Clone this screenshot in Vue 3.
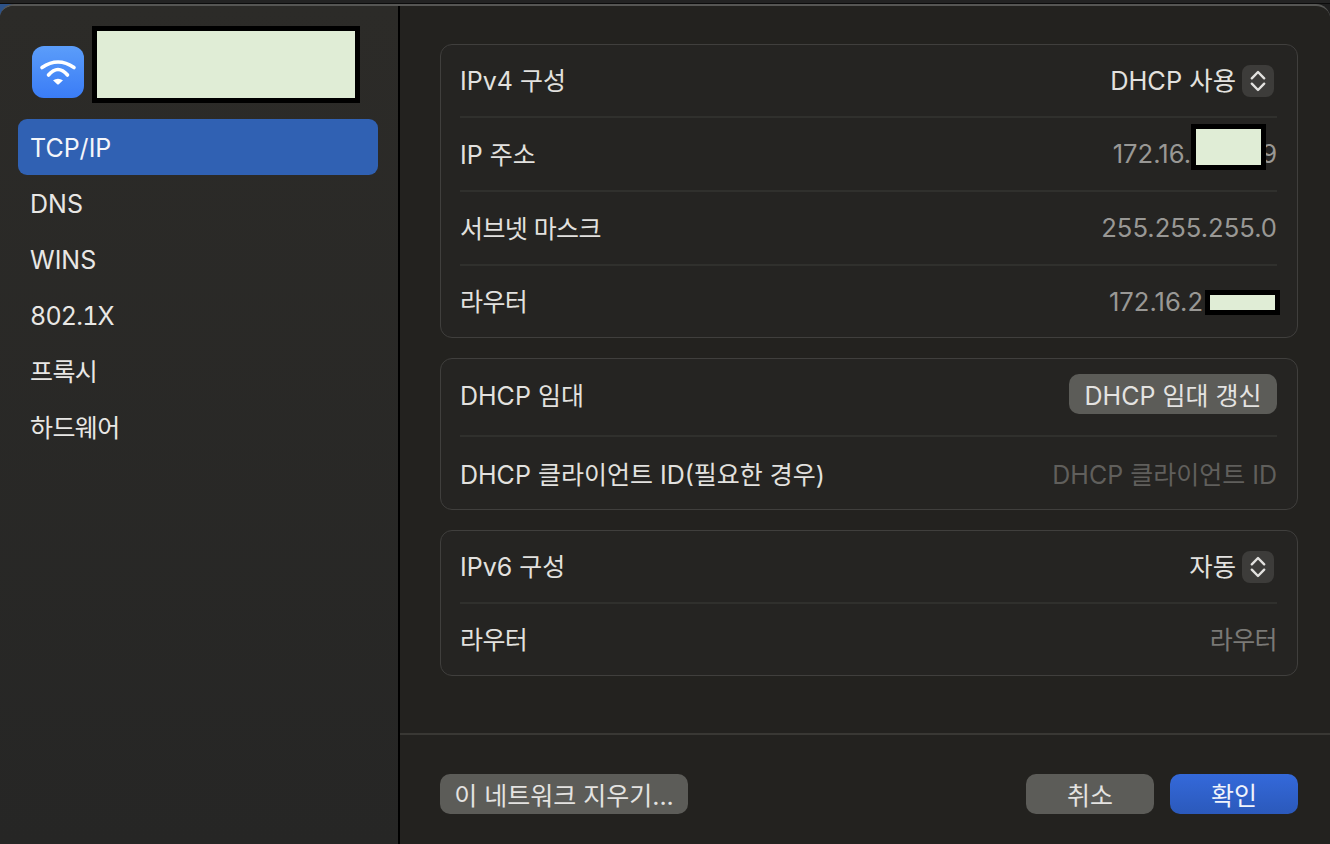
<template>
  <div class="screen">
    <div class="backdrop"></div>
    <div class="window">
      <aside class="sidebar">
        <header class="network">
          <div class="wifi-icon">
            <svg width="52" height="52" viewBox="0 0 52 52" fill="none">
              <path d="M10 21.5Q26 10.5 42 21.5" stroke="#fff" stroke-width="3.6" stroke-linecap="round" />
              <path d="M16.5 29Q26 18 35.5 29" stroke="#fff" stroke-width="3.6" stroke-linecap="round" />
              <path d="M21 34.2Q26 31.2 31 34.2L26.8 38.2Q26 38.9 25.2 38.2Z" fill="#fff" />
            </svg>
          </div>
          <div class="mask mask-name"></div>
        </header>
        <nav class="menu">
          <div
            v-for="item in menu"
            :key="item.label"
            class="menu-item"
            :class="[item.kind, { active: item.label === 'TCP/IP' }]"
          >
            {{ item.label }}
          </div>
        </nav>
      </aside>

      <main class="content">
        <div class="groups">
          <section class="group">
            <div class="row first">
              <span>IPv4 구성</span>
              <span class="select">
                DHCP 사용
                <span class="stepper">
                  <svg width="18" height="24" viewBox="0 0 18 24" fill="none">
                    <path d="M2.8 9.3L9 3l6.2 6.3M2.8 14.7L9 21l6.2-6.3" stroke="#e2e1df" stroke-width="2.4" stroke-linecap="round" stroke-linejoin="round" />
                  </svg>
                </span>
              </span>
            </div>
            <div class="row">
              <span>IP 주소</span>
              <span class="value">172.16.<span class="gap-ip"></span>9</span>
              <div class="mask mask-ip"></div>
            </div>
            <div class="row">
              <span class="tight">서브넷 마스크</span>
              <span class="value">255.255.255.0</span>
            </div>
            <div class="row last">
              <span class="tight">라우터</span>
              <span class="value">172.16.2<span class="gap-router"></span></span>
              <div class="mask mask-router"></div>
            </div>
          </section>

          <section class="group">
            <div class="row lease">
              <span>DHCP 임대</span>
              <button class="btn renew">DHCP 임대 갱신</button>
            </div>
            <div class="row client">
              <span>DHCP 클라이언트 ID(필요한 경우)</span>
              <span class="placeholder">DHCP 클라이언트 ID</span>
            </div>
          </section>

          <section class="group">
            <div class="row first">
              <span>IPv6 구성</span>
              <span class="select">
                자동
                <span class="stepper">
                  <svg width="18" height="24" viewBox="0 0 18 24" fill="none">
                    <path d="M2.8 9.3L9 3l6.2 6.3M2.8 14.7L9 21l6.2-6.3" stroke="#e2e1df" stroke-width="2.4" stroke-linecap="round" stroke-linejoin="round" />
                  </svg>
                </span>
              </span>
            </div>
            <div class="row last">
              <span class="tight">라우터</span>
              <span class="hint tight">라우터</span>
            </div>
          </section>
        </div>

        <footer class="footer">
          <button class="btn forget">이 네트워크 지우기...</button>
          <div class="actions">
            <button class="btn action">취소</button>
            <button class="btn action primary">확인</button>
          </div>
        </footer>
      </main>
    </div>
  </div>
</template>

<script setup>
const menu = [
  { label: 'TCP/IP' },
  { label: 'DNS' },
  { label: 'WINS' },
  { label: '802.1X', kind: 'num' },
  { label: '프록시', kind: 'ko' },
  { label: '하드웨어', kind: 'ko' }
]
</script>

<style>
html,
body {
  margin: 0;
  background: #1d1d1d;
}
</style>

<style scoped>
.screen {
  width: 1330px;
  height: 844px;
  overflow: hidden;
  display: flex;
  flex-direction: column;
  background: linear-gradient(90deg, #2d5288 10px, #1f1f1f 16px);
  font-family: Inter, "Noto Sans CJK KR", sans-serif;
  font-size: 25px;
  color: #e2e1df;
}

.backdrop {
  height: 4px;
  flex: none;
  background: #232323;
  border-bottom: 1px solid #0c0c0c;
  box-sizing: border-box;
}

.window {
  flex: 1;
  display: flex;
  min-height: 0;
  border-top: 2px solid #565654;
  border-radius: 14px 14px 0 0;
  background: #23221f;
  overflow: hidden;
}

.sidebar {
  width: 400px;
  flex: none;
  box-sizing: border-box;
  padding: 0 20px 0 18px;
  background: linear-gradient(#2c2b28, #262625);
  border-right: 2px solid #000;
  position: relative;
}

.network {
  height: 113px;
  display: flex;
  align-items: flex-start;
  padding: 40px 0 0 14px;
  box-sizing: border-box;
}

.wifi-icon {
  width: 52px;
  height: 52px;
  border-radius: 12px;
  background: linear-gradient(#5b9dfa, #3a7cf6);
}

.wifi-icon svg {
  display: block;
}

.menu-item {
  height: 56px;
  box-sizing: border-box;
  display: flex;
  align-items: center;
  padding: 2px 0 0 12px;
  border-radius: 9px;
  color: #e8e7e5;
}

.menu-item.num {
  font-variant-numeric: tabular-nums;
  letter-spacing: -0.8px;
}

.menu-item.ko {
  padding-top: 0;
  padding-bottom: 2px;
  letter-spacing: -0.6px;
}

.menu-item.active {
  background: #3061b3;
  color: #f4f6fa;
}

.content {
  flex: 1;
  display: flex;
  flex-direction: column;
  min-width: 0;
}

.groups {
  flex: 1;
  display: flex;
  flex-direction: column;
  gap: 20px;
  padding: 38px 32px 0 40px;
}

.group {
  border: 1px solid #403f3d;
  border-radius: 12px;
  background: #252422;
  padding: 0 20px 0 19px;
}

.row {
  height: 74px;
  display: flex;
  align-items: center;
  justify-content: space-between;
  border-bottom: 2px solid #30302d;
  box-sizing: border-box;
  position: relative;
  padding-bottom: 3px;
}

.row.first {
  height: 73px;
}

.row.last {
  height: 71px;
  border-bottom: none;
}

.row.lease {
  height: 78px;
  padding-bottom: 7px;
}

.row.client {
  height: 72px;
  border-bottom: none;
  padding-bottom: 1px;
}

.tight {
  letter-spacing: -0.6px;
}

.value {
  display: flex;
  font-size: 25.6px;
  padding-top: 2px;
  color: #999895;
}

.hint {
  color: #7a7976;
}

.placeholder {
  color: #605f5c;
}

.select {
  display: flex;
  align-items: center;
  gap: 6px;
  padding-right: 3px;
  font-size: 25.4px;
}

.stepper {
  width: 32px;
  height: 32px;
  margin-top: 4px;
  border-radius: 8px;
  background: #3d3c3a;
  display: flex;
  align-items: center;
  justify-content: center;
}

.btn {
  font: inherit;
  border: none;
  color: #e4e3e1;
  background: #5c5c58;
  border-radius: 10px;
  height: 40px;
  padding: 0;
  display: flex;
  align-items: center;
  justify-content: center;
}

.renew {
  width: 208px;
}

.footer {
  height: 111px;
  flex: none;
  box-sizing: border-box;
  border-top: 2px solid #393834;
  display: flex;
  justify-content: space-between;
  padding: 39px 32px 0 40px;
}

.forget {
  width: 248px;
}

.actions {
  display: flex;
  gap: 16px;
}

.action {
  width: 128px;
}

.primary {
  background: linear-gradient(#3469da, #2b59bb);
  color: #f1f4fb;
}

.gap-ip {
  display: inline-block;
  width: 70px;
}

.gap-router {
  display: inline-block;
  width: 74px;
}

/* redaction boxes pasted over the screenshot */
.mask {
  position: absolute;
  box-sizing: border-box;
  border: 5px solid #000;
  background: #e0edd6;
}

.mask-name {
  left: 92px;
  top: 20px;
  width: 268px;
  height: 77px;
}

.mask-ip {
  right: 11px;
  top: 6px;
  width: 75px;
  height: 46px;
}

.mask-router {
  right: -3px;
  top: 24px;
  width: 75px;
  height: 25px;
}
</style>
